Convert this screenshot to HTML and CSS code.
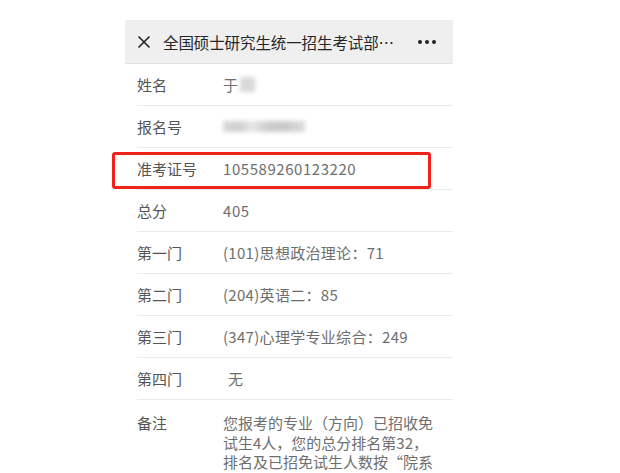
FILE: index.html
```html
<!DOCTYPE html>
<html lang="zh-CN">
<head>
<meta charset="utf-8">
<title>成绩查询</title>
<link rel="stylesheet" href="styles.css">
</head>
<body>
<div class="phone">
  <header class="nav">
    <svg class="close" width="14" height="14" viewBox="0 0 14 14" aria-hidden="true">
      <path d="M1.5 1.5 L12.5 12.5 M12.5 1.5 L1.5 12.5" stroke="#222" stroke-width="1.6" fill="none"/>
    </svg>
    <span class="title">全国硕士研究生统一招生考试部…</span>
    <span class="more"><i></i><i></i><i></i></span>
  </header>
  <ul class="rows">
    <li class="row"><span class="label">姓名</span><span class="value">于<span class="blur name-blur"></span></span></li>
    <li class="row"><span class="label">报名号</span><span class="value"><span class="blur num-blur"></span></span></li>
    <li class="row"><span class="label">准考证号</span><span class="value digits">105589260123220</span></li>
    <li class="row"><span class="label">总分</span><span class="value digits">405</span></li>
    <li class="row"><span class="label">第一门</span><span class="value">(101)思想政治理论：71</span></li>
    <li class="row"><span class="label">第二门</span><span class="value">(204)英语二：85</span></li>
    <li class="row"><span class="label">第三门</span><span class="value">(347)心理学专业综合：249</span></li>
    <li class="row"><span class="label">第四门</span><span class="value indent">无</span></li>
    <li class="row note"><span class="label">备注</span><span class="value text">您报考的专业（方向）已招收免试生4人，您的总分排名第32，排名及已招免试生人数按“院系</span></li>
  </ul>
</div>
<div class="highlight"></div>
</body>
</html>
```

FILE: styles.css
```css
html, body {
  margin: 0;
  padding: 0;
  background: #ffffff;
}
body {
  position: relative;
  width: 620px;
  height: 473px;
  overflow: hidden;
  font-family: "Noto Sans CJK SC", "Noto Sans", sans-serif;
}
.phone {
  margin: 20px 0 0 125px;
  width: 328px;
}
.nav {
  height: 43px;
  background: #efefef;
  border-bottom: 1px solid #e2e2e2;
  display: flex;
  align-items: center;
  padding-left: 12px;
}
.close {
  flex: none;
  margin-top: 1px;
}
.title {
  margin-left: 12px;
  font-size: 15.5px;
  color: #262626;
  white-space: nowrap;
  letter-spacing: -0.1px;
}
.more {
  margin-left: 24px;
  display: flex;
  gap: 3px;
  margin-top: 1px;
}
.more i {
  width: 4px;
  height: 4px;
  border-radius: 50%;
  background: #222;
}
.rows {
  list-style: none;
  margin: 0;
  padding: 0;
}
.row {
  margin-left: 12px;
  height: 41px;
  border-bottom: 1px solid #ebebeb;
  display: flex;
  align-items: center;
  font-size: 15px;
}
.label {
  width: 86px;
  flex: none;
  color: #555;
}
.value {
  color: #6e6e6e;
  display: flex;
  align-items: center;
  letter-spacing: 0.3px;
}
.digits {
  letter-spacing: 0.55px;
}
.indent {
  padding-left: 5px;
}
.blur {
  display: inline-block;
  filter: blur(2px);
}
.name-blur {
  width: 15px;
  height: 15px;
  background: #d9d9d9;
  margin-left: 2px;
}
.num-blur {
  width: 82px;
  height: 11px;
  background: linear-gradient(90deg, #d8d8d8 0%, #cfcfcf 20%, #e6e6e6 35%, #cccccc 55%, #c8c8c8 75%, #dcdcdc 100%);
}
.note {
  height: auto;
  align-items: flex-start;
  padding-top: 13px;
  border-bottom: none;
}
.note .label {
  line-height: 20px;
}
.text {
  display: block;
  width: 214px;
  line-height: 19.5px;
  letter-spacing: 0;
}
.highlight {
  position: absolute;
  left: 112px;
  top: 152px;
  width: 319px;
  height: 37px;
  box-sizing: border-box;
  border: 3px solid #f2211c;
  border-radius: 3px;
}
```
